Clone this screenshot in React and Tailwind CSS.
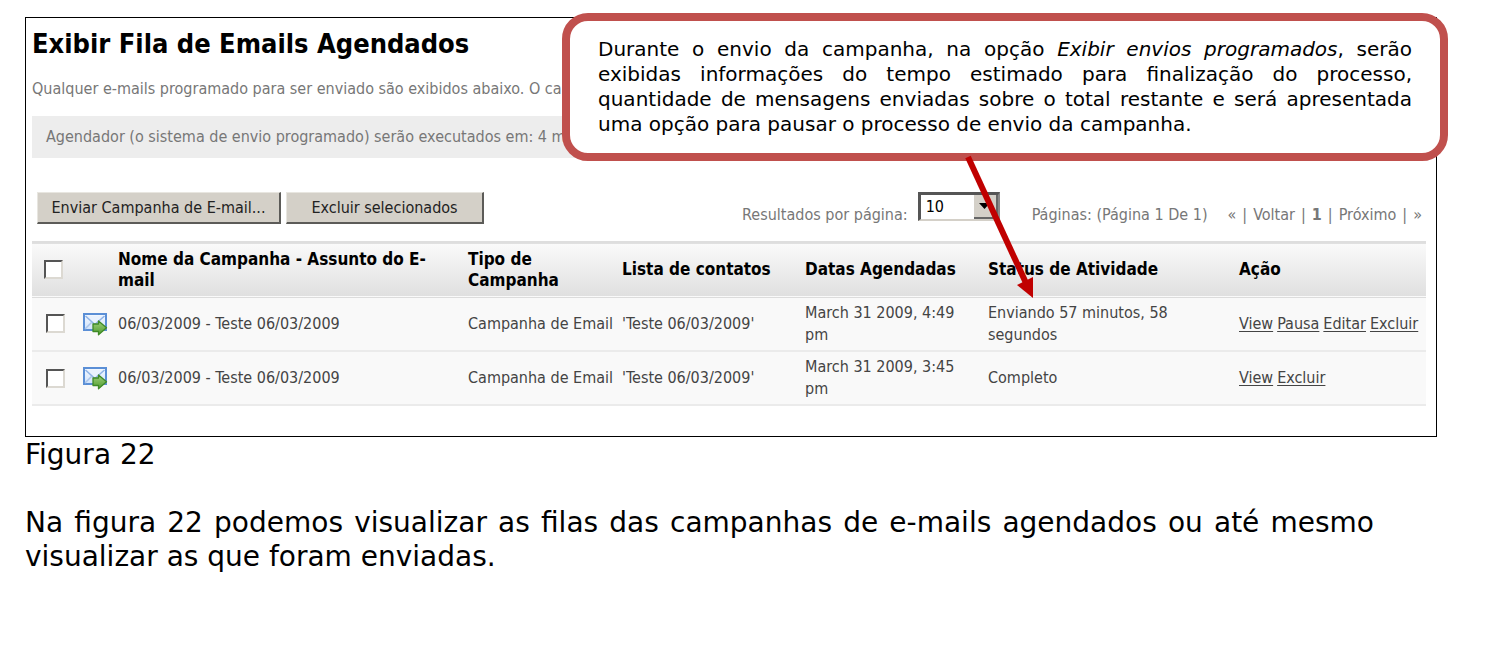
// App.jsx
import { useState } from "react";

const CAMPAIGNS = [
  {
    id: 1,
    name: "06/03/2009 - Teste 06/03/2009",
    type: "Campanha de Email",
    list: "'Teste 06/03/2009'",
    date: "March 31 2009, 4:49 pm",
    status: "Enviando 57 minutos, 58 segundos",
    actions: ["View", "Pausa", "Editar", "Excluir"],
  },
  {
    id: 2,
    name: "06/03/2009 - Teste 06/03/2009",
    type: "Campanha de Email",
    list: "'Teste 06/03/2009'",
    date: "March 31 2009, 3:45 pm",
    status: "Completo",
    actions: ["View", "Excluir"],
  },
];

const Checkbox = ({ label, checked, onChange }) => (
  <input
    type="checkbox"
    aria-label={label}
    checked={checked}
    onChange={onChange}
    className="block size-[19px] appearance-none border-2 border-t-[#555] border-l-[#555] border-r-[#dcd9d2] border-b-[#dcd9d2] bg-white checked:bg-[#555]"
  />
);

const ClassicButton = ({ children, className }) => (
  <button
    type="button"
    className={`h-8 border-t border-l border-r-2 border-b-2 border-t-[#e8e6e0] border-l-[#e8e6e0] border-r-[#5c5b58] border-b-[#5c5b58] bg-[#d4d0c8] whitespace-nowrap text-[#222] ${className}`}
  >
    {children}
  </button>
);

const MailIcon = () => (
  <svg width="26" height="24" viewBox="0 0 26 24" className="block" aria-hidden="true">
    <defs>
      <linearGradient id="paper" x1="0" y1="0" x2="0" y2="1">
        <stop offset="0" stopColor="#f4f9ff" />
        <stop offset="1" stopColor="#cfe2fb" />
      </linearGradient>
      <linearGradient id="arrow" x1="0" y1="0" x2="0" y2="1">
        <stop offset="0" stopColor="#9fd07c" />
        <stop offset="1" stopColor="#4f9c2e" />
      </linearGradient>
    </defs>
    <rect x="2" y="2" width="22" height="16" fill="url(#paper)" stroke="#5b8fd6" strokeWidth="2" />
    <path d="M3 17 9.500 10.500M22 17 15.500 10.500" stroke="#a9c4ea" strokeWidth="1.500" />
    <path d="M3.500 4 12.800 12.500 22.500 4" fill="#e9f2fe" stroke="#8fb3e6" strokeWidth="1.500" />
    <path
      d="M11 12h5.500V9l8 6.800-8 7V19.500H11z"
      fill="url(#arrow)"
      stroke="#3f8a26"
      strokeWidth="1.300"
      strokeLinejoin="round"
    />
  </svg>
);

const Callout = () => (
  <div className="absolute -top-[5px] -right-[12px] w-[886px] rounded-[26px] border-8 border-[#c0504d] bg-white px-7 py-4 text-justify font-['DejaVu_Sans',sans-serif] text-xl leading-[25px] text-black">
    <p>
      Durante o envio da campanha, na opção <em>Exibir envios programados</em>,
      serão exibidas informações do tempo estimado para finalização do
      processo, quantidade de mensagens enviadas sobre o total restante e será
      apresentada uma opção para pausar o processo de envio da campanha.
    </p>
    <svg
      width="80"
      height="144"
      viewBox="0 0 80 144"
      className="absolute top-[134px] left-[390px]"
      aria-hidden="true"
    >
      <path d="M8 2 66 128" stroke="#c00000" strokeWidth="6" />
      <path d="M73 143 57 130 73 122z" fill="#c00000" />
    </svg>
  </div>
);

const App = () => {
  const [selected, setSelected] = useState([]);
  const [perPage, setPerPage] = useState("10");

  const toggle = (id) =>
    setSelected((prev) =>
      prev.includes(id) ? prev.filter((item) => item !== id) : [...prev, id]
    );

  const allSelected = selected.length === CAMPAIGNS.length;

  return (
    <div className="min-h-screen bg-white pt-[17px] pr-[53px] pl-[25px] font-['DejaVu_Sans',sans-serif] text-black">
      <section className="relative border border-black pt-2 pr-[10px] pb-[30px] pl-[6px] font-['DejaVu_Sans_Condensed','DejaVu_Sans',sans-serif] text-base leading-[22px] text-[#444]">
        <h1 className="text-[27px] leading-9 font-bold text-black">
          Exibir Fila de Emails Agendados
        </h1>
        <p className="mt-4 text-[#777]">
          Qualquer e-mails programado para ser enviado são exibidos abaixo. O ca
        </p>
        <p className="mt-4 bg-[#ededed] px-[14px] py-[10px] text-[#777]">
          Agendador (o sistema de envio programado) serão executados em: 4 m
        </p>

        {/* Toolbar */}
        <div className="mt-[34px] flex items-start justify-between pl-[5px]">
          <div className="flex gap-[5px]">
            <ClassicButton className="w-[244px]">
              Enviar Campanha de E-mail...
            </ClassicButton>
            <ClassicButton className="w-[198px]">
              Excluir selecionados
            </ClassicButton>
          </div>

          <div className="flex items-center pr-1 text-[#777]">
            <label htmlFor="per-page">Resultados por página:</label>
            <div className="relative mr-8 mb-4 ml-[10px]">
              <select
                id="per-page"
                value={perPage}
                onChange={(e) => setPerPage(e.target.value)}
                className="block h-[29px] w-[82px] appearance-none border-t-3 border-r-2 border-b-2 border-l-3 border-t-[#555] border-l-[#555] border-r-[#888] border-b-[#d4d0c8] bg-white pl-[5px] text-black"
              >
                <option>10</option>
                <option>20</option>
                <option>50</option>
              </select>
              <span className="pointer-events-none absolute top-[3px] right-[2px] flex h-6 w-6 items-center justify-center border-r-2 border-b-2 border-[#666] bg-[#d4d0c8]">
                <svg width="11" height="6" viewBox="0 0 11 6" aria-hidden="true">
                  <path d="M0 0h11L5.500 6z" fill="#000" />
                </svg>
              </span>
            </div>
            <span className="mr-5">Páginas: (Página 1 De 1)</span>
            <div className="flex gap-1.5">
              <span>«</span>
              <span>|</span>
              <span>Voltar</span>
              <span>|</span>
              <b>1</b>
              <span>|</span>
              <span>Próximo</span>
              <span>|</span>
              <span>»</span>
            </div>
          </div>
        </div>

        {/* Scheduled queue */}
        <table className="mt-1 w-full table-fixed border-collapse text-left">
          <colgroup>
            <col className="w-[50px]" />
            <col className="w-9" />
            <col className="w-[350px]" />
            <col className="w-[154px]" />
            <col className="w-[183px]" />
            <col className="w-[183px]" />
            <col className="w-[251px]" />
            <col />
          </colgroup>
          <thead>
            <tr className="h-[55px] border-t-2 border-b border-t-[#dedede] border-b-[#dcdcdc] bg-linear-to-b from-[#fafafa] to-[#e0e0e0] text-[17px] leading-[21px] text-black">
              <th className="pl-3">
                <Checkbox
                  label="Selecionar todos"
                  checked={allSelected}
                  onChange={() =>
                    setSelected(allSelected ? [] : CAMPAIGNS.map((c) => c.id))
                  }
                />
              </th>
              <th></th>
              <th className="pr-8">Nome da Campanha - Assunto do E-mail</th>
              <th className="pr-8">Tipo de Campanha</th>
              <th>Lista de contatos</th>
              <th>Datas Agendadas</th>
              <th>Status de Atividade</th>
              <th>Ação</th>
            </tr>
          </thead>
          <tbody>
            {CAMPAIGNS.map((c) => (
              <tr key={c.id} className="h-[54px] border-b-2 border-[#ebebeb] bg-[#f9f9f9]">
                <td className="pl-[14px]">
                  <Checkbox
                    label={`Selecionar ${c.name}`}
                    checked={selected.includes(c.id)}
                    onChange={() => toggle(c.id)}
                  />
                </td>
                <td>
                  <MailIcon />
                </td>
                <td>{c.name}</td>
                <td className="whitespace-nowrap">{c.type}</td>
                <td>{c.list}</td>
                <td className="pr-5">{c.date}</td>
                <td className="pr-12">{c.status}</td>
                <td className="whitespace-nowrap">
                  <span className="flex gap-1">
                    {c.actions.map((action) => (
                      <a key={action} href="#" className="underline underline-offset-2">
                        {action}
                      </a>
                    ))}
                  </span>
                </td>
              </tr>
            ))}
          </tbody>
        </table>

        <Callout />
      </section>

      <p className="mt-px text-[28px] leading-[34px]">Figura 22</p>
      <p className="mt-[34px] mr-[63px] text-justify text-[28px] leading-[34px]">
        Na figura 22 podemos visualizar as filas das campanhas de e-mails
        agendados ou até mesmo visualizar as que foram enviadas.
      </p>
    </div>
  );
};

export default App;
